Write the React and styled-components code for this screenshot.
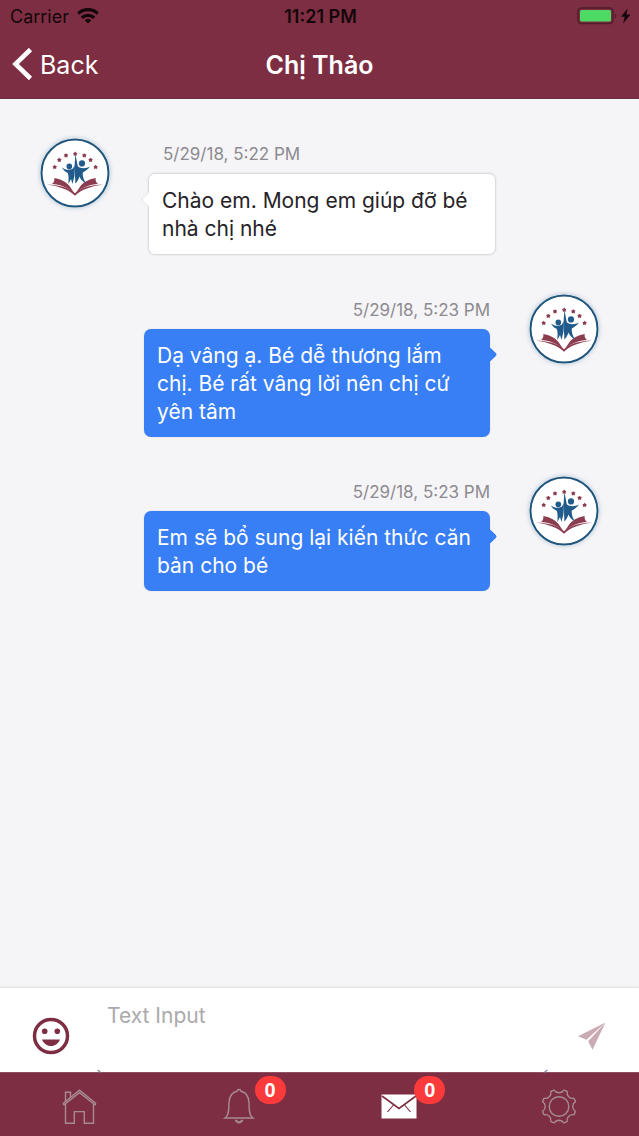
import React, { useState } from 'react';
import styled, { createGlobalStyle } from 'styled-components';

const messages = [
    { id: 1, mine: false, time: '5/29/18, 5:22 PM', text: 'Chào em. Mong em giúp đỡ bé nhà chị nhé' },
    { id: 2, mine: true, time: '5/29/18, 5:23 PM', text: 'Dạ vâng ạ. Bé dễ thương lắm chị. Bé rất vâng lời nên chị cứ yên tâm' },
    { id: 3, mine: true, time: '5/29/18, 5:23 PM', text: 'Em sẽ bổ sung lại kiến thức căn bản cho bé' },
];

const WifiIcon = () => (
    <svg width="22" height="16" viewBox="0 0 22 16" fill="none" stroke="#14070b" strokeWidth="3.3" aria-hidden="true">
        <path d="M1.2 5.6C6.8 .4 15.2 .4 20.8 5.6" />
        <path d="M4.8 9.7C8.4 6.5 13.6 6.5 17.2 9.7" />
        <path d="M7.6 12.2C9.6 10.5 12.4 10.5 14.4 12.2L11 15.6Z" fill="#14070b" stroke="none" />
    </svg>
)

const BatteryIcon = () => (
    <svg width="54" height="18" viewBox="0 0 54 18" aria-hidden="true">
        <rect x="1" y="1" width="35" height="15.500" rx="3.500" fill="none" stroke="#501c2a" strokeWidth="1.4" />
        <rect x="3" y="3" width="31" height="11.500" rx="1.500" fill="#4cd964" />
        <path d="M38 6.5Q40.5 9 38 11.5Z" fill="#501c2a" />
        <path d="M50.6 1.500L44 9.800H47.800L46 16.400L53.600 7.400H49.400Z" fill="#14070b" />
    </svg>
)

const ChevronIcon = () => (
    <svg width="22" height="34" viewBox="0 0 22 34" fill="none" stroke="#fff" strokeWidth="4.6" aria-hidden="true">
        <path d="M18.500 1.500L3.500 16L18.500 30.500" />
    </svg>
)

const SmileIcon = () => (
    <svg width="38" height="38" viewBox="0 0 38 38" aria-hidden="true">
        <circle cx="19" cy="19" r="16.5" fill="none" stroke="#7d2e42" strokeWidth="3.5" />
        <circle cx="12.7" cy="14.3" r="2.8" fill="#7d2e42" />
        <circle cx="25.3" cy="14.3" r="2.8" fill="#7d2e42" />
        <path d="M10 22.500H28C26.400 26.600 23 29 19 29S11.600 26.600 10 22.500Z" fill="#7d2e42" />
    </svg>
)

const SendIcon = () => (
    <svg width="28" height="28" viewBox="0 0 28 28" fill="#cbabb3" aria-hidden="true">
        <path d="M27.5 .5L0 14.2L8.5 17.800Z" />
        <path d="M27.5 .5L14.500 27.800L10.200 19.200Z" />
    </svg>
)

const HomeIcon = () => (
    <svg width="36" height="36" viewBox="1 0 36 36" fill="none" stroke="#a88b91" strokeWidth="1.4" aria-hidden="true">
        <path d="M2 15.5L18.5 2.2L35 15.5" />
        <path d="M2 15.5L3 16.7L18.5 4.7L34 16.7L35 15.5" />
        <path d="M4.5 13V4.3H9.5V9" />
        <path d="M4.5 15.8V35.2H13.3V23.6H23.3V35.2H32.5V15.8" />
    </svg>
)

const BellIcon = () => (
    <svg width="36" height="36" viewBox="1 0 36 36" fill="none" stroke="#a88b91" strokeWidth="1.4" aria-hidden="true">
        <path d="M4 30C8.500 27 7.600 21 8 14.500C8.500 7 11.500 4.200 16 3.300Q16.300 1.500 18 1.500T20 3.300C24.500 4.200 27.500 7 28 14.500C28.400 21 27.500 27 32 30Z" />
        <path d="M14 32C14.600 36.200 21.400 36.200 22 32H20C19.500 34 16.500 34 16 32Z" fill="#a88b91" strokeWidth=".5" />
    </svg>
)

const MailIcon = () => (
    <svg width="36" height="36" viewBox="0 0 36 36" fill="none" stroke="#7d2e42" aria-hidden="true">
        <path d="M.5 6.500H35.500V30.500H.500Z" fill="#fff" stroke="none" />
        <path d="M1 8L18 20.500L35 8" strokeWidth="1.6" />
        <path d="M12.500 17L6.500 23.800M23.500 17L29.500 23.800" strokeWidth="1.1" />
    </svg>
)

const point = (deg, r) => {
    const a = (deg * Math.PI) / 180;
    return `${(18 + r * Math.sin(a)).toFixed(2)} ${(18.5 - r * Math.cos(a)).toFixed(2)}`;
}

const gearPath = [0, 1, 2, 3, 4, 5, 6, 7].map((i) => {
    const a = i * 45 + 22.5;
    return `${i ? 'L' : 'M'}${point(a - 8, 16.2)}Q${point(a - 7, 17.6)} ${point(a, 17)}Q${point(a + 7, 17.6)} ${point(a + 8, 16.2)}Q${point(a + 10, 14.2)} ${point(a + 22.5, 13.8)}Q${point(a + 35, 14.2)} ${point(a + 37, 16.2)}`;
}).join('') + 'Z';

const GearIcon = () => (
    <svg width="36" height="36" viewBox="0 0 36 36" fill="none" stroke="#a88b91" strokeWidth="1.4" aria-hidden="true">
        <path d={gearPath} />
        <circle cx="18" cy="18.5" r="9.800" />
    </svg>
)

const stars = [[14.7, 29], [19.3, 21.900], [26, 17.400], [35.200, 15.800], [44.300, 17.400], [50.600, 21.900], [55.600, 29]];

const SchoolLogo = () => (
    <svg width="70" height="70" viewBox="0 0 70 70" aria-hidden="true">
        <circle cx="35" cy="35" r="33.500" fill="#fff" stroke="#21567c" strokeWidth="2" />
        <g fill="#8b3c4f">
            {stars.map(([x, y]) => (
                <path key={x} transform={`translate(${x} ${y})`} d="M0-2.200L1-1.100L2.200-.8L1.500.5L1.500 2L0 1.600L-1.500 2L-1.500.5L-2.200-.8L-1-1.100Z" />
            ))}
            <path d="M14.300 40C20 41 26 43.500 29.500 48L34.500 55.500C27.500 49 20 46.500 12 46Q15 43.500 14.300 40Z" />
            <path d="M55.700 40C50 41 44 43.500 40.500 48L35.500 55.500C42.500 49 50 46.500 58 46Q55 43.500 55.700 40Z" />
            <path d="M6.800 46.500C19 46.800 29 49.500 35 55.300C41 49.500 51 46.800 63.200 46.500C51 48.300 41.500 51.300 35 57.800C28.500 51.300 19 48.300 6.800 46.500Z" />
        </g>
        <g fill="#205b8b">
            <circle cx="29.3" cy="28.4" r="2.8" />
            <circle cx="42" cy="25.400" r="3.100" />
            <path d="M22 29.400C25.500 32 29.500 32.400 32.600 30.800L34.800 27.500L34.400 38L32.500 46L31 41L28.300 46C28.600 41.500 29 37.500 27.600 34.700C25.300 33.700 23.300 32 22 29.400Z" />
            <path d="M35.400 16L37.800 28.300C41 31 46 30.700 50 28.600C47.500 32 45 33.500 42.800 34.600C42.300 37.500 43.500 42 46 45.300C42.500 43.800 40.500 41 39.400 38.500C38.600 41.300 37.500 43.300 35.300 45.600C35.500 40 34.300 34 34.500 29Z" />
        </g>
    </svg>
)

const tabs = [
    { name: 'Home', Icon: HomeIcon },
    { name: 'Notifications', Icon: BellIcon, count: 0 },
    { name: 'Messages', Icon: MailIcon, count: 0 },
    { name: 'Settings', Icon: GearIcon },
];

const App = () => {
    const [draft, setDraft] = useState('');

    return (
        <Screen>
            <GlobalStyle />
            <Header>
                <StatusBar>
                    <Carrier>Carrier <WifiIcon /></Carrier>
                    <Clock>11:21 PM</Clock>
                    <Battery><BatteryIcon /></Battery>
                </StatusBar>
                <NavBar>
                    <BackButton type="button"><ChevronIcon />Back</BackButton>
                    <Title>Chị Thảo</Title>
                </NavBar>
            </Header>
            <MessageList>
                {messages.map(({ id, mine, time, text }) => (
                    <Message key={id} $mine={mine}>
                        <Avatar><SchoolLogo /></Avatar>
                        <Content>
                            <Time $mine={mine}>{time}</Time>
                            <Bubble $mine={mine}>{text}</Bubble>
                        </Content>
                    </Message>
                ))}
            </MessageList>
            <Composer onSubmit={(e) => e.preventDefault()}>
                <IconButton type="button" aria-label="Emoji"><SmileIcon /></IconButton>
                <Field>
                    <Input aria-label="Message" placeholder="Text Input" value={draft} onChange={(e) => setDraft(e.target.value)} />
                </Field>
                <IconButton type="submit" aria-label="Send"><SendIcon /></IconButton>
            </Composer>
            <TabBar>
                {tabs.map(({ name, Icon, count }) => (
                    <Tab key={name} type="button" aria-label={name}>
                        <Icon />
                        {count !== undefined && <Badge>{count}</Badge>}
                    </Tab>
                ))}
            </TabBar>
        </Screen>
    )
}

export default App;

const GlobalStyle = createGlobalStyle`
    * {
        box-sizing: border-box;
    }

    body {
        margin: 0;
        font-family: Inter, "Noto Sans", sans-serif;
        background-color: #F5F4F7;
    }

    button, textarea {
        font-family: inherit;
        border: none;
        background: none;
        padding: 0;
        margin: 0;
    }

    button {
        cursor: pointer;
    }

    svg {
        display: block;
    }
`

const Screen = styled.div`
    min-height: 100vh;
    display: flex;
    flex-direction: column;
`

const Header = styled.header`
    background-color: #7D2E42;
    border-bottom: 1px solid #6B3040;
`

const StatusBar = styled.div`
    display: grid;
    grid-template-columns: 1fr auto 1fr;
    align-items: center;
    height: 32px;
    padding: 0 8px 0 10px;
    font-size: 18px;
    color: #14070B;
`

const Carrier = styled.span`
    display: flex;
    align-items: center;
    gap: 8px;
`

const Clock = styled.span`
    font-weight: 600;
`

const Battery = styled.span`
    justify-self: end;
`

const NavBar = styled.div`
    display: grid;
    grid-template-columns: 1fr auto 1fr;
    align-items: center;
    height: 66px;
    padding: 0 12px;
    color: #FFFFFF;
`

const BackButton = styled.button`
    justify-self: start;
    display: flex;
    align-items: center;
    gap: 6px;
    font-size: 25px;
    color: #FFFFFF;
`

const Title = styled.h1`
    margin: 0;
    font-size: 25px;
    font-weight: 600;
`

const MessageList = styled.main`
    flex: 1;
    display: flex;
    flex-direction: column;
    gap: 39px;
    padding: 39px 40px;
`

const Message = styled.article`
    display: flex;
    flex-direction: ${({ $mine }) => ($mine ? 'row-reverse' : 'row')};
    gap: ${({ $mine }) => ($mine ? '39px' : '38px')};
    padding: ${({ $mine }) => ($mine ? '0 0 0 104px' : '0 103px 0 0')};
`

const Avatar = styled.div`
    flex: none;
    height: 70px;
    border-radius: 50%;
    box-shadow: 0 0 4px rgba(60, 130, 160, 0.4);
`

const Content = styled.div`
    flex: 1;
    padding-top: 6px;
`

const Time = styled.time`
    display: block;
    margin-bottom: 8px;
    padding-left: 15px;
    font-size: 17px;
    line-height: 21px;
    color: #8C8B90;
    text-align: ${({ $mine }) => ($mine ? 'right' : 'left')};
`

const Bubble = styled.p`
    position: relative;
    margin: 0;
    padding: 13px 13px 11px;
    border-radius: 7px;
    border: ${({ $mine }) => ($mine ? 'none' : '1px solid #DCDBDF')};
    box-shadow: 0 0 2px rgba(0, 0, 0, 0.12);
    background-color: ${({ $mine }) => ($mine ? '#387EF5' : '#FFFFFF')};
    color: ${({ $mine }) => ($mine ? '#FFFFFF' : '#262328')};
    font-size: 21px;
    line-height: 28px;

    &::after {
        content: "";
        position: absolute;
        top: 20px;
        ${({ $mine }) => ($mine ? 'right: -5px' : 'left: -6px')};
        width: 10px;
        height: 10px;
        border: solid ${({ $mine }) => ($mine ? '#387EF5' : '#E4E3E7')};
        border-width: 0 0 1px 1px;
        border-radius: 2px;
        background-color: inherit;
        transform: rotate(45deg);
    }
`

const Composer = styled.form`
    display: flex;
    align-items: center;
    height: 84px;
    padding: 0 33px 0 32px;
    background-color: #FFFFFF;
    box-shadow: 0 -1px 2px rgba(0, 0, 0, 0.1);
`

const IconButton = styled.button`
    flex: none;
    margin-top: 12px;
`

const Field = styled.div`
    position: relative;
    flex: 1;
    align-self: stretch;
    margin: 0 30px 0 27px;
    padding: 14px 10px 0;

    &::before, &::after {
        content: "";
        position: absolute;
        bottom: 0;
        width: 5px;
        height: 1px;
        background-color: #6C7390;
        transform: rotate(40deg);
    }

    &::before {
        left: 0;
    }

    &::after {
        right: 0;
        transform: rotate(-40deg);
    }
`

const Input = styled.textarea`
    display: block;
    width: 100%;
    height: 56px;
    resize: none;
    outline: none;
    font-size: 21px;
    line-height: 28px;
    color: #262328;

    &::placeholder {
        color: #AAA9AC;
        opacity: 1;
    }
`

const TabBar = styled.nav`
    display: grid;
    grid-template-columns: repeat(4, 1fr);
    height: 64px;
    background-color: #7D2E42;
    border-top: 1px solid #8F4F60;
`

const Tab = styled.button`
    position: relative;
    display: flex;
    align-items: center;
    justify-content: center;
    padding-top: 2px;
`

const Badge = styled.span`
    position: absolute;
    top: 3px;
    left: calc(50% + 15px);
    width: 31px;
    border-radius: 14px;
    background-color: #FB3A3C;
    font-family: "Liberation Sans", sans-serif;
    font-size: 20px;
    font-weight: 700;
    line-height: 28px;
    color: #FFFFFF;
`
